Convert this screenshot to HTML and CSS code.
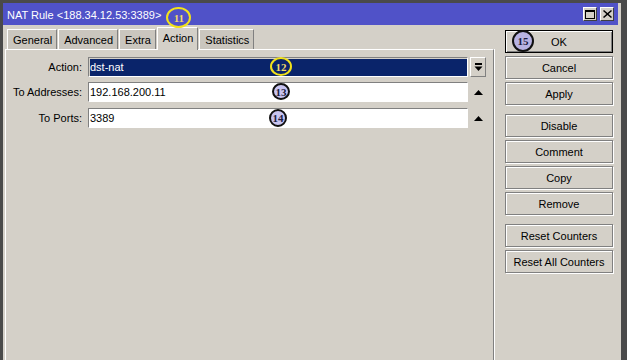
FILE: index.html
```html
<!DOCTYPE html>
<html lang="en">
<head>
	<meta charset="UTF-8">
	<title>NAT Rule</title>
	<link rel="stylesheet" href="styles.css">
</head>
<body>
	<div class="window">
		<div class="titlebar">
			<span class="title">NAT Rule &lt;188.34.12.53:3389&gt;</span>
			<span class="badge badge-title">11</span>
			<div class="winbtns">
				<span class="wbtn"><svg width="10" height="9" viewBox="0 0 10 9"><rect x="0.5" y="0.5" width="9" height="8" fill="none" stroke="#000"/><rect x="0" y="0" width="10" height="2" fill="#000"/></svg></span>
				<span class="wbtn"><svg width="9" height="8" viewBox="0 0 9 8"><path d="M1 0 L4.5 3 L8 0 L9 1 L5.6 4 L9 7 L8 8 L4.5 5 L1 8 L0 7 L3.4 4 L0 1 Z" fill="#000"/></svg></span>
			</div>
		</div>
		<div class="content">
			<div class="main">
				<div class="tabs">
					<div class="tab">General</div>
					<div class="tab">Advanced</div>
					<div class="tab">Extra</div>
					<div class="tab active">Action</div>
					<div class="tab">Statistics</div>
				</div>
				<div class="panel">
					<div class="row">
						<label>Action:</label>
						<div class="field selected">dst-nat<span class="badge badge-sel b12">12</span></div>
						<span class="dropbtn"><svg width="9" height="9" viewBox="0 0 9 9"><rect x="1" y="0" width="7" height="2" fill="#000"/><path d="M0.5 3.5 H8.5 L4.5 8 Z" fill="#000"/></svg></span>
					</div>
					<div class="row">
						<label>To Addresses:</label>
						<div class="field">192.168.200.11<span class="badge badge-num b13">13</span></div>
						<span class="arrow"><svg width="9" height="5" viewBox="0 0 9 5"><path d="M0 5 L4.5 0 L9 5 Z" fill="#000"/></svg></span>
					</div>
					<div class="row row-last">
						<label>To Ports:</label>
						<div class="field">3389<span class="badge badge-num b14">14</span></div>
						<span class="arrow"><svg width="9" height="5" viewBox="0 0 9 5"><path d="M0 5 L4.5 0 L9 5 Z" fill="#000"/></svg></span>
					</div>
				</div>
			</div>
			<div class="side">
				<div class="group">
					<div class="btn default"><span class="badge badge-num b15">15</span>OK</div>
					<div class="btn">Cancel</div>
					<div class="btn">Apply</div>
				</div>
				<div class="group">
					<div class="btn">Disable</div>
					<div class="btn">Comment</div>
					<div class="btn">Copy</div>
					<div class="btn">Remove</div>
				</div>
				<div class="group">
					<div class="btn">Reset Counters</div>
					<div class="btn">Reset All Counters</div>
				</div>
			</div>
		</div>
	</div>
</body>
</html>
```

FILE: styles.css
```css
*{margin:0;padding:0;box-sizing:border-box;}
body{background:#4a4a4a;height:360px;overflow:hidden;font:11px "Liberation Sans",Arial,sans-serif;color:#000;}

.window{margin:3px 0 0 3px;width:618px;height:357px;background:#d4d0c8;display:flex;flex-direction:column;}

/* title bar */
.titlebar{height:22px;margin-right:3px;padding:2px 0 0 4px;background:#5052c8;color:#fff;display:flex;align-items:center;}
.title{white-space:nowrap;}
.winbtns{margin-left:auto;margin-right:4px;display:flex;gap:3px;align-self:flex-start;margin-top:2px;}
.wbtn{width:14px;height:14px;background:#d4d0c8;border:1px solid;border-color:#fff #404040 #404040 #fff;display:flex;align-items:center;justify-content:center;}

/* numbered markers */
.badge{display:inline-flex;align-items:center;justify-content:center;border-radius:50%;font:bold 11px "Liberation Serif","Times New Roman",serif;}
.badge-title{position:relative;z-index:2;width:25px;height:21px;margin-left:5px;align-self:flex-start;margin-top:2px;border:2px solid #f2e21a;background:#5052c8;color:#f0dc6a;}
.badge-sel{position:absolute;width:22px;height:19px;border:2px solid #f2e21a;background:#0a246a;color:#f0dc6a;}
.badge-num{position:absolute;border:2px solid #111;background:#c8c4f0;color:#1c1c40;}
.b12{left:181px;top:-1px;}
.b13{left:183px;top:0;width:18px;height:17px;}
.b14{left:180px;top:0;width:18px;height:18px;}
.b15{left:6px;top:-1px;width:22px;height:22px;background:#b8b3e2;}

/* body */
.content{flex:1;display:flex;}
.main{width:492px;padding-left:2px;display:flex;flex-direction:column;}

.tabs{height:24px;padding-left:2px;display:flex;align-items:flex-end;}
.tab{height:20px;padding:0 4px 0 5px;background:#cac6be;border-top:1px solid #fff;border-left:1px solid #fff;border-right:1px solid #808080;display:flex;align-items:center;margin-right:1px;}
.tab.active{height:23px;margin-bottom:-1px;padding-bottom:2px;background:#d4d0c8;position:relative;z-index:1;}

.panel{flex:1;width:489px;padding-top:7px;border-top:1px solid #fff;border-left:1px solid #fff;border-right:1px solid #808080;box-shadow:1px 0 #fff;display:flex;flex-direction:column;gap:5px;}
.row{height:20px;display:flex;align-items:center;}
.row-last{margin-top:1px;}
.row label{width:76px;text-align:right;}
.field{position:relative;width:380px;height:20px;margin-left:6px;padding-left:1px;background:#fff;border:1px solid;border-color:#808080 #fff #fff #808080;display:flex;align-items:center;}
.field.selected{background:#0a246a;color:#fff;box-shadow:inset 1px 1px #d4d0c8;}
.dropbtn{width:16px;height:20px;margin-left:2px;border:1px solid;border-color:#fff #808080 #808080 #fff;display:flex;align-items:center;justify-content:center;}
.arrow{width:16px;margin-left:2px;display:flex;justify-content:center;}

/* buttons */
.side{padding:5px 0 0 10px;display:flex;flex-direction:column;}
.group{display:flex;flex-direction:column;gap:3px;}
.group + .group{margin-top:9px;}
.btn{position:relative;width:108px;height:23px;border:1px solid #808080;box-shadow:inset 1px 1px #fff,1px 1px #fff;display:flex;align-items:center;justify-content:center;}
.btn.default{border-color:#000;box-shadow:inset 1px 1px #fff,inset -1px -1px #808080;}
```
